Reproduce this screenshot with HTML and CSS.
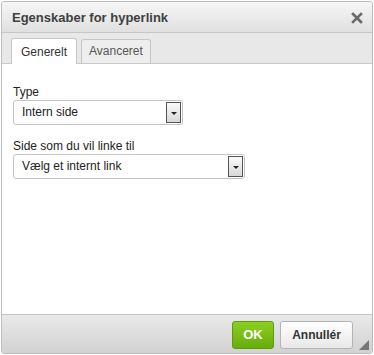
FILE: index.html
```html
<!DOCTYPE html>
<html lang="da">
<head>
  <meta charset="UTF-8" />
  <title>Egenskaber for hyperlink</title>
  <link rel="stylesheet" href="styles.css">
</head>
<body>
  <div class="dialog">
    <div class="titlebar">
      <span class="title">Egenskaber for hyperlink</span>
      <span class="close">
        <svg width="12" height="12" viewBox="0 0 12 12">
          <path d="M2 2 L10 10 M10 2 L2 10" stroke="#6a6a6a" stroke-width="2.6" stroke-linecap="square"/>
        </svg>
      </span>
    </div>
    <div class="tabs">
      <div class="tab active">Generelt</div>
      <div class="tab">Avanceret</div>
    </div>
    <div class="content">
      <div class="field">
        <label>Type</label>
        <div class="select short">
          <span class="value">Intern side</span>
          <span class="arrow"><i></i></span>
        </div>
      </div>
      <div class="field">
        <label>Side som du vil linke til</label>
        <div class="select long">
          <span class="value">Vælg et internt link</span>
          <span class="arrow"><i></i></span>
        </div>
      </div>
    </div>
    <div class="footer">
      <button class="btn ok">OK</button>
      <button class="btn cancel">Annullér</button>
      <span class="grip"></span>
    </div>
  </div>
</body>
</html>
```
FILE: styles.css
```css
body {
  margin: 0;
  font-family: "Liberation Sans", Arial, sans-serif;
  font-size: 12px;
  color: #222;
  background: #fff;
}
.dialog {
  width: 372px;
  height: 353px;
  margin: 1px;
  border: 1px solid #bcbcbc;
  border-radius: 3px;
  box-sizing: border-box;
  display: flex;
  flex-direction: column;
  background: #fff;
  overflow: hidden;
}
.titlebar {
  height: 30px;
  flex: none;
  display: flex;
  align-items: center;
  justify-content: space-between;
  padding: 0 9px 0 10px;
  background: linear-gradient(#f6f6f6, #e0e0e0);
  border-bottom: 1px solid #c6c6c6;
}
.title {
  font-size: 13px;
  font-weight: bold;
  color: #404040;
}
.close {
  display: flex;
  margin-top: 1px;
}
.tabs {
  height: 30px;
  flex: none;
  display: flex;
  align-items: flex-end;
  gap: 4px;
  padding: 0 0 0 9px;
  background: #e8e8e8;
  border-bottom: 1px solid #c9c9c9;
}
.tab {
  height: 23px;
  line-height: 23px;
  padding: 0 7px;
  border: 1px solid #c6c6c6;
  border-bottom: none;
  border-radius: 3px 3px 0 0;
  background: #eeeeee;
  color: #555;
  font-size: 12px;
}
.tab.active {
  height: 25px;
  line-height: 27px;
  background: #fff;
  color: #333;
  margin-bottom: -1px;
  padding: 0 9px;
}
.content {
  flex: 1;
  padding: 13px 10px 0 11px;
}
.field {
  margin-top: 8px;
}
.field + .field {
  margin-top: 14px;
}
label {
  display: block;
  font-size: 12px;
  color: #222;
  margin-bottom: 1px;
}
.select {
  height: 25px;
  box-sizing: border-box;
  border: 1px solid #c4c4c4;
  border-radius: 3px;
  display: flex;
  align-items: stretch;
  justify-content: space-between;
  background: #fff;
}
.select.short {
  width: 170px;
}
.select.long {
  width: 232px;
}
.value {
  padding-left: 8px;
  line-height: 23px;
  font-size: 12px;
  color: #222;
}
.arrow {
  width: 15px;
  margin: 1px;
  border: 1px solid #555;
  box-sizing: border-box;
  background: linear-gradient(#fafafa, #d8d8d8);
  display: flex;
  align-items: center;
  justify-content: center;
}
.arrow i {
  width: 0;
  height: 0;
  border-left: 3px solid transparent;
  border-right: 3px solid transparent;
  border-top: 3px solid #222;
  margin-top: 2px;
}
.footer {
  height: 38px;
  flex: none;
  border-top: 1px solid #c4c4c4;
  background: linear-gradient(#e9e9e9, #d2d2d2);
  display: flex;
  align-items: center;
  justify-content: flex-end;
  gap: 6px;
  padding: 0 19px 0 0;
  position: relative;
}
.btn {
  height: 28px;
  border-radius: 3px;
  font-family: "Liberation Sans", Arial, sans-serif;
  font-size: 12px;
  font-weight: bold;
  cursor: pointer;
  margin-top: 1px;
}
.ok {
  width: 42px;
  border: 1px solid #5a9c0a;
  background: linear-gradient(#8ccf22, #68ac0c);
  color: #fff;
  font-size: 13px;
}
.cancel {
  width: 73px;
  border: 1px solid #b4b4b4;
  background: linear-gradient(#ffffff, #e8e8e8);
  color: #333;
}
.grip {
  position: absolute;
  right: 3px;
  bottom: 3px;
  width: 0;
  height: 0;
  border-left: 10px solid transparent;
  border-bottom: 10px solid #777;
}
```
